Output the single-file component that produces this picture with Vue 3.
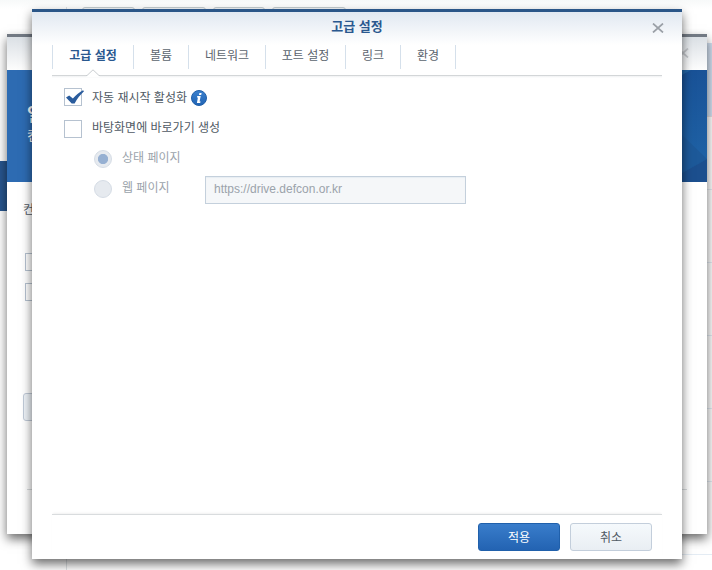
<script setup>
const tabs = [
  { label: '고급 설정', width: 81 },
  { label: '볼륨', width: 55 },
  { label: '네트워크', width: 77 },
  { label: '포트 설정', width: 80 },
  { label: '링크', width: 55 },
  { label: '환경', width: 55 },
]
const toolbar = [53, 64, 52, 74]
</script>

<template>
  <div class="desktop">
    <div class="base">
      <nav class="side"><div class="selected"></div></nav>
      <main class="content">
        <div class="toolbar">
          <span v-for="(w, i) in toolbar" :key="i" class="tool" :style="{ width: w + 'px' }"></span>
        </div>
        <div class="list">
          <div class="list-item active"></div>
          <div v-for="n in 6" :key="n" class="list-item"></div>
        </div>
      </main>
    </div>

    <section class="window back">
      <header class="back-head">
        <svg class="close" viewBox="0 0 12 10"><path d="M1 0.5 L11 9.5 M11 0.5 L1 9.5" /></svg>
      </header>
      <div class="banner">
        <svg class="facets" width="100" height="112" viewBox="0 0 100 112">
          <defs><linearGradient id="facetFill" x1="0" y1="0" x2="0" y2="1"><stop offset="0" stop-color="#195297" /><stop offset="1" stop-color="#2065a8" /></linearGradient></defs>
          <path class="f1" d="M0 0H100V112H0Z" />
          <path class="f2" d="M75 5L84 0H60V20Z" />
          <path class="f3" d="M75 65L100 89L75 103Z" />
          <path class="f4" d="M75 103L100 89V112H60Z" />
        </svg>
        <div class="banner-title">일</div>
        <div class="banner-sub">컨</div>
      </div>
      <div class="back-body">
        <div class="back-label">컨</div>
        <span class="box"></span>
        <span class="box"></span>
        <span class="back-button"></span>
      </div>
      <div class="back-rule"></div>
    </section>

    <section class="window front">
      <header class="head">
        <h1>고급 설정</h1>
        <svg class="close" viewBox="0 0 12 10"><path d="M1 0.5 L11 9.5 M11 0.5 L1 9.5" /></svg>
      </header>
      <nav class="tabs">
        <a v-for="(t, i) in tabs" :key="t.label" class="tab" :class="{ on: i === 0 }" :style="{ width: t.width + 'px' }">{{ t.label }}</a>
      </nav>
      <div class="tab-rule">
        <svg class="notch" width="14" height="8" viewBox="0 0 14 8">
          <path class="notch-fill" d="M0.5 8V6.5L7 0.5L13.5 6.5V8Z" />
          <path class="notch-line" d="M0 6.5H1L7 0.8L13 6.5H14" />
        </svg>
      </div>
      <form class="form" @submit.prevent>
        <div class="row">
          <span class="box">
            <svg class="check" width="22" height="20" viewBox="0 0 22 20"><path d="M2 9.4L5.2 7.6L8.9 10.6C11.5 7.4 15.2 4.4 19 2.2L20 3.2C16.4 6.6 13.1 10.6 10.6 15.4H7.7Z" /></svg>
          </span>
          <label>자동 재시작 활성화</label>
          <svg class="info" width="16" height="16" viewBox="0 0 16 16">
            <defs><linearGradient id="infoFill" x1="0" y1="0" x2="0" y2="1"><stop offset="0" stop-color="#3b80ce" /><stop offset="1" stop-color="#2164b4" /></linearGradient></defs>
            <circle cx="8" cy="8" r="7.5" />
            <path d="M8.4 3H10.6L10.2 5H8ZM6.3 6H9.7L8.6 11.6H9.7L9.1 12.9H5.9L6.9 7.4H5.9Z" />
          </svg>
        </div>
        <div class="row second">
          <span class="box"></span>
          <label>바탕화면에 바로가기 생성</label>
        </div>
        <div class="row sub">
          <span class="radio on"></span>
          <label>상태 페이지</label>
        </div>
        <div class="row sub">
          <span class="radio"></span>
          <label class="web">웹 페이지</label>
          <span class="field">https://drive.defcon.or.kr</span>
        </div>
      </form>
      <footer class="foot">
        <button class="btn primary">적용</button>
        <button class="btn">취소</button>
      </footer>
    </section>
  </div>
</template>

<style>
html, body { margin: 0; overflow: hidden; }
</style>
<style scoped>
* { box-sizing: border-box; }
.desktop {
  position: relative; width: 712px; height: 570px; overflow: hidden; background: #fff;
  font-family: "Liberation Sans", "Noto Sans CJK KR", sans-serif; font-size: 12px; line-height: 18px; color: #505a64;
}
.base { display: flex; height: 570px; background: linear-gradient(#f7f9f9, #fff 9px) ; }
.side { width: 67px; padding-top: 154px; margin-top: 7px; border-right: 1px solid #dfe3e6; }
.selected { height: 50px; background: #28568f; }
.content { flex: 1; padding-top: 7px; }
.toolbar { display: flex; gap: 7px; height: 28px; padding-left: 15px; }
.tool { height: 28px; border: 1px solid #c5cdd0; border-radius: 3px; background: #f3f6f8; }
.list { margin-top: 8px; }
.list-item { height: 73px; border-bottom: 1px solid #e4ecf4; }
.list-item.active { height: 74px; background: #d3e1f2; border-bottom-color: #e6dfe0; }

.window { position: absolute; background: #fff; box-shadow: 0 5px 10px rgba(0,0,0,.58); }
.back { left: 7px; top: 34px; width: 700px; height: 500px; border-top: 3px solid #727983; }
.front { left: 32px; top: 9px; width: 650px; height: 550px; border-top: 3px solid #2b5688; display: flex; flex-direction: column; }
.back-head { height: 33px; display: flex; justify-content: flex-end; padding: 11px 18px 0 0; background: linear-gradient(#dbe0e5, #fdfdfd); }
.close { width: 12px; height: 10px; }
.close path { stroke: #9ba0a7; stroke-width: 1.7; fill: none; }
.back-head .close path { stroke: #c3c6ca; }
.banner { display: flow-root; position: relative; height: 112px; padding: 34px 0 0 20px; background: #2d6bb2; color: #fff; }
.facets { position: absolute; right: 0; top: 0; }
.f1 { fill: url(#facetFill); }
.f2 { fill: #2365a6; }
.f3 { fill: #1d5999; }
.f4 { fill: #1c4f8e; }
.banner-title { font-size: 18px; font-weight: bold; line-height: 22px; }
.banner-sub { font-size: 13px; line-height: 20px; }
.back-body { display: flex; flex-direction: column; padding: 19px 0 0 16px; height: 307px; }
.back-label { height: 52px; }
.back-body .box { margin: 0 0 12px 2px; }
.back-button { margin-top: 80px; width: 80px; height: 28px; border: 1px solid #c0cad7; border-radius: 3px; background: #edf2f7; }
.back-rule { margin: 0 20px; height: 1px; background: #d9dcde; }

.head { height: 33px; position: relative; display: flex; justify-content: center; padding-top: 5px; background: linear-gradient(#e1e8f1, #fff); }
h1 { margin: 0; font-size: 13px; line-height: 20px; color: #2a588f; }
.head .close { position: absolute; right: 18px; top: 11px; }
.tabs { display: flex; height: 24px; margin: 0 20px; border-left: 1px solid #d5e0eb; }
.tab { text-align: center; line-height: 22px; border-right: 1px solid #d5e0eb; color: #5b646e; }
.tab.on { color: #2a588f; font-weight: bold; }
.tab-rule { position: relative; margin: 6px 20px 0; height: 3px; border-top: 1px solid #d3d6d8; background: linear-gradient(#f0f1f2, #fff); }
.notch { position: absolute; left: 34px; top: -7px; }
.notch-fill { fill: #fff; }
.notch-line { fill: none; stroke: #c9cdd0; }
.form { flex: 1; padding: 4px 32px 0; }
.row { height: 30px; display: flex; align-items: center; }
.row label { padding-top: 2px; }
.box { flex: none; display: block; width: 18px; height: 18px; border: 1px solid #b6c2d0; background: #fff; }
.row .box { margin-right: 10px; }
.second .box { margin-top: 4px; }
.check { display: block; margin: -1px; overflow: visible; }
.check path { fill: #2a5c9d; }
.info { margin: 2px 0 0 4px; }
.info circle { fill: url(#infoFill); stroke: #205fa9; }
.info path { fill: #fff; }
.sub { padding-left: 30px; color: #9ba3ab; }
.radio { flex: none; width: 18px; height: 18px; margin: 4px 10px 0 0; border: 1px solid #d5dce5; border-radius: 50%; background: #e6eaef; }
.radio.on { background: radial-gradient(circle, #96b0d2 4.7px, #e6eaef 5.5px); }
.web { width: 83px; }
.field { width: 261px; height: 28px; margin-top: 6px; padding: 0 8px; line-height: 25px; border: 1px solid #c4d0dc; background: #f5f7f9; box-shadow: inset 0 1px 1px #e7edf2; }
.foot { height: 45px; margin: 0 20px; padding: 8px 10px 0; display: flex; justify-content: flex-end; gap: 10px; border-top: 1px solid #d9dcde; box-shadow: 0 -2px 2px -1px #f1f1f1; }
.btn { width: 82px; height: 28px; padding: 1px 0 0; border: 1px solid #c3cedb; border-radius: 3px; font: inherit; line-height: 18px; color: #505a64; background: linear-gradient(#f5f9fc, #e9eef3); }
.primary { color: #fff; border-color: #2060ab; background: linear-gradient(#397dcb, #2363b2); }
</style>
